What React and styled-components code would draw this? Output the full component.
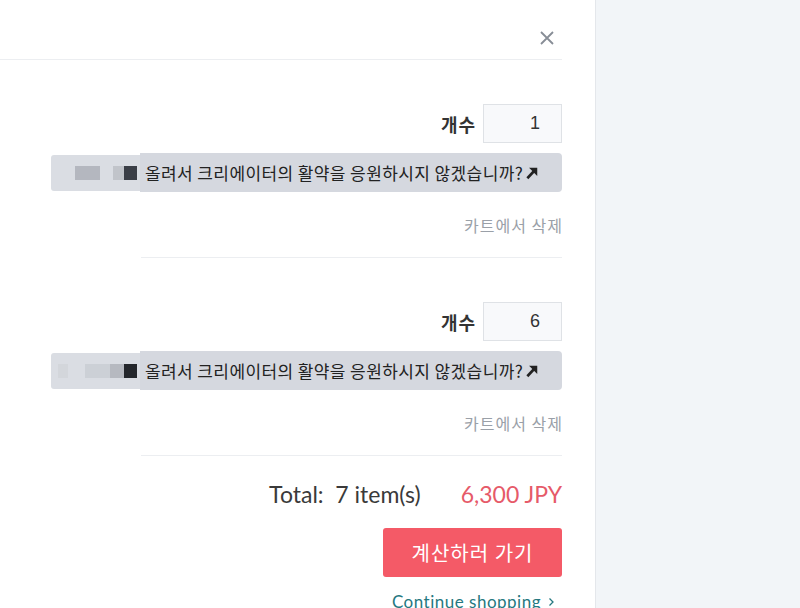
import React from 'react';
import styled, { createGlobalStyle } from 'styled-components';

const GlobalStyle = createGlobalStyle`
  html, body {
    margin: 0;
    padding: 0;
    background: #fff;
  }
  body {
    font-family: "Lato", "Noto Sans CJK KR", sans-serif;
    color: #333;
  }
`;

const Page = styled.div`
  display: flex;
  width: 800px;
  height: 608px;
  overflow: hidden;
`;

const Modal = styled.div`
  width: 596px;
  flex: none;
  background: #fff;
  border-right: 1px solid #e4e7eb;
  padding-right: 33px;
  box-sizing: border-box;
`;

const Side = styled.div`
  flex: 1;
  background: #f2f5f8;
`;

const Header = styled.div`
  height: 60px;
  box-sizing: border-box;
  border-bottom: 1px solid #eceef1;
  display: flex;
  justify-content: flex-end;
  align-items: flex-end;
  padding: 0 7px 13px 0;
`;

const Close = styled.button`
  border: none;
  background: none;
  padding: 0;
  width: 16px;
  height: 16px;
  cursor: pointer;
  display: flex;
`;

const Body = styled.div`
  margin-left: 141px;
`;

const Item = styled.div`
  padding: 44px 0 22px;
  border-bottom: 1px solid #eceef1;
  display: flex;
  flex-direction: column;
  align-items: flex-end;
`;

const QtyRow = styled.div`
  display: flex;
  align-items: center;
  gap: 7px;
`;

const QtyLabel = styled.span`
  font-family: "Noto Sans CJK KR", sans-serif;
  font-weight: 700;
  font-size: 18px;
  letter-spacing: 1px;
  color: #333;
`;

const QtyInput = styled.div`
  width: 79px;
  height: 39px;
  box-sizing: border-box;
  border: 1px solid #dfe2e6;
  background: #f8f9fb;
  font-family: "Liberation Sans", sans-serif;
  font-size: 18px;
  color: #333;
  display: flex;
  align-items: center;
  justify-content: flex-end;
  padding-right: 21px;
`;

const Bar = styled.div`
  align-self: stretch;
  margin-left: -90px;
  margin-top: 10px;
  display: flex;
  height: 39px;
`;

const Mosaic = styled.div`
  width: 89px;
  flex: none;
  margin: 2px 0 1px;
  background: #dadde3;
  display: flex;
  align-items: center;
  justify-content: flex-end;
  border-radius: 3px 0 0 3px;
`;

const Tile = styled.span`
  width: ${p => p.w}px;
  height: 14px;
  margin-right: ${p => p.gap || 0}px;
  background: ${p => p.c};
`;

const BarMain = styled.div`
  flex: 1;
  background: #d5d8df;
  border-radius: 0 4px 4px 0;
  display: flex;
  align-items: center;
  padding-left: 5px;
  font-family: "Noto Sans CJK KR", sans-serif;
  font-size: 17px;
  letter-spacing: 0.4px;
  color: #222;
  white-space: nowrap;
  gap: 2px;
`;

const Remove = styled.a`
  margin-top: 23px;
  font-family: "Noto Sans CJK KR", sans-serif;
  font-size: 16px;
  letter-spacing: 1px;
  margin-right: -1px;
  line-height: 20px;
  color: #9aa0a8;
  cursor: pointer;
`;

const Footer = styled.div`
  display: flex;
  flex-direction: column;
  align-items: flex-end;
  padding-top: 23px;
`;

const Total = styled.div`
  font-size: 23px;
  line-height: 30px;
  color: #3a3a3a;
  display: flex;
  gap: 40px;
`;

const Price = styled.span`
  color: #e65a69;
`;

const Checkout = styled.button`
  margin-top: 19px;
  width: 179px;
  height: 49px;
  border: none;
  border-radius: 3px;
  background: #f45a67;
  color: #fff;
  font-family: "Noto Sans CJK KR", sans-serif;
  font-size: 20px;
  letter-spacing: 1px;
  cursor: pointer;
`;

const Continue = styled.a`
  margin-top: 14px;
  margin-right: 7px;
  font-size: 17px;
  letter-spacing: 0.5px;
  color: #25787f;
  display: flex;
  align-items: center;
  gap: 7px;
`;

const ArrowIcon = () => (
  <svg width="14" height="14" viewBox="0 0 12 12">
    <path d="M2 10.5 L9 3" stroke="#222" strokeWidth="2.2" fill="none" />
    <path d="M3.5 1.5 H10.5 V8.5 Z" fill="#222" />
  </svg>
);

const items = [
  { qty: 1, tiles: [['#b4b7bf', 25, 13], ['#c1c4ca', 11, 0], ['#3b3f47', 13, 0]] },
  { qty: 6, tiles: [['#d3d6db', 10, 17], ['#ccd0d6', 25, 0], ['#b6b9c0', 14, 0], ['#24272c', 13, 0]] },
];

export default function App() {
  return (
    <>
      <GlobalStyle />
      <Page>
        <Modal>
          <Header>
            <Close aria-label="close">
              <svg width="16" height="16" viewBox="0 0 16 16">
                <path d="M2 2 L14 14 M14 2 L2 14" stroke="#878d96" strokeWidth="1.8" />
              </svg>
            </Close>
          </Header>
          <Body>
            {items.map((it, i) => (
              <Item key={i}>
                <QtyRow>
                  <QtyLabel>개수</QtyLabel>
                  <QtyInput>{it.qty}</QtyInput>
                </QtyRow>
                <Bar>
                  <Mosaic>
                    {it.tiles.map(([c, w, g], j) => (
                      <Tile key={j} c={c} w={w} gap={g} />
                    ))}
                    <Tile c="transparent" w={3} />
                  </Mosaic>
                  <BarMain>
                    올려서 크리에이터의 활약을 응원하시지 않겠습니까?
                    <ArrowIcon />
                  </BarMain>
                </Bar>
                <Remove>카트에서 삭제</Remove>
              </Item>
            ))}
            <Footer>
              <Total>
                <span>Total:&nbsp; 7 item(s)</span>
                <Price>6,300 JPY</Price>
              </Total>
              <Checkout>계산하러 가기</Checkout>
              <Continue>
                Continue shopping
                <svg width="7" height="10" viewBox="0 0 7 10">
                  <path d="M1.5 1.5 L5 5 L1.5 8.5" stroke="#25787f" strokeWidth="1.3" fill="none" />
                </svg>
              </Continue>
            </Footer>
          </Body>
        </Modal>
        <Side />
      </Page>
    </>
  );
}
